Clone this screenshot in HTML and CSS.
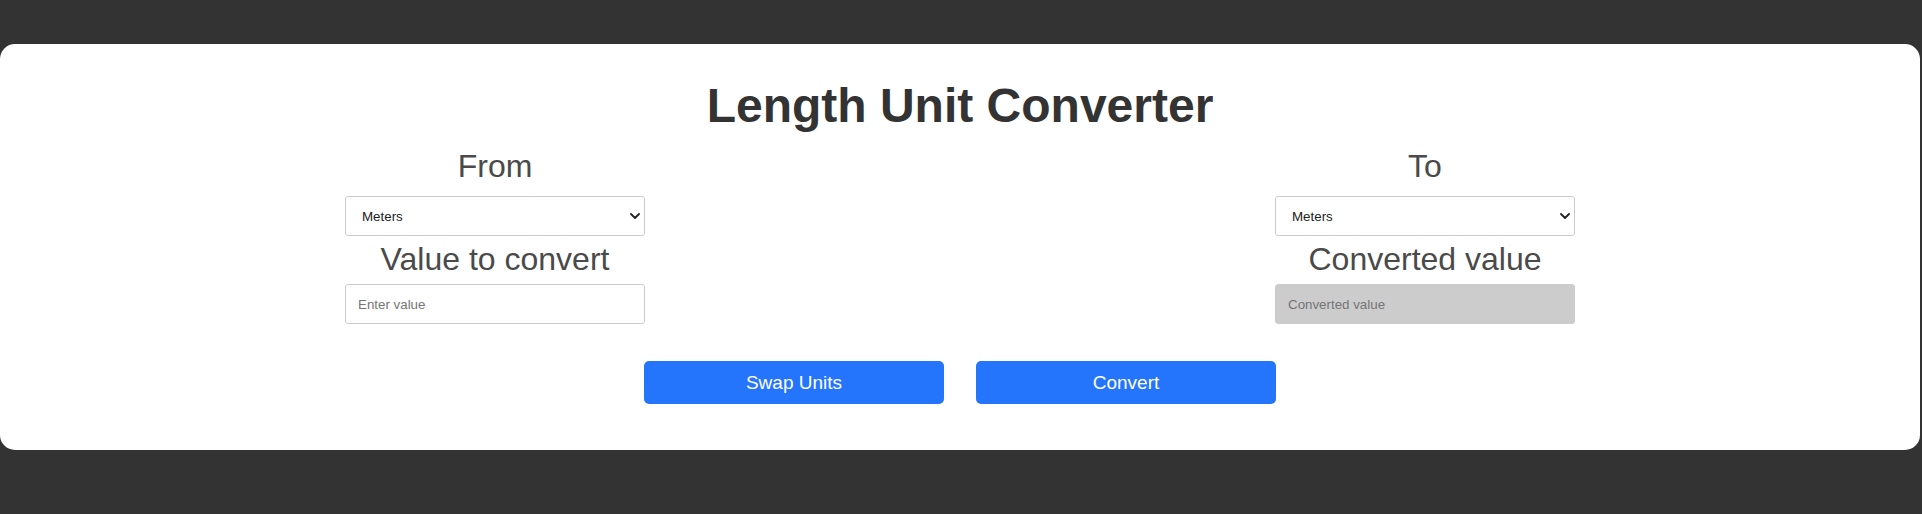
FILE: index.html
```html
<!DOCTYPE html>
<html lang="en">
<head>
<meta charset="utf-8">
<title>Length Unit Converter</title>
<link rel="stylesheet" href="styles.css">
</head>
<body>
  <div class="card">
    <h1 class="title">Length Unit Converter</h1>
    <div class="columns">
      <div class="column">
        <label class="label label-top" for="from">From</label>
        <select id="from" class="field select">
          <option>Meters</option>
          <option>Kilometers</option>
          <option>Centimeters</option>
          <option>Feet</option>
          <option>Inches</option>
        </select>
        <label class="label label-mid" for="value">Value to convert</label>
        <input id="value" class="field input" type="text" placeholder="Enter value">
      </div>
      <div class="column">
        <label class="label label-top" for="to">To</label>
        <select id="to" class="field select">
          <option>Meters</option>
          <option>Kilometers</option>
          <option>Centimeters</option>
          <option>Feet</option>
          <option>Inches</option>
        </select>
        <label class="label label-mid" for="result">Converted value</label>
        <input id="result" class="field input output" type="text" placeholder="Converted value" readonly>
      </div>
    </div>
    <div class="actions">
      <button class="btn" type="button">Swap Units</button>
      <button class="btn" type="button">Convert</button>
    </div>
  </div>
</body>
</html>
```

FILE: styles.css
```css
html, body {
  margin: 0;
  padding: 0;
}

body {
  background: #333333;
  font-family: "Liberation Sans", Arial, sans-serif;
  height: 514px;
  overflow: hidden;
}

.card {
  box-sizing: border-box;
  width: 1920px;
  margin-top: 44px;
  background: #ffffff;
  border-radius: 15px;
  padding: 34px 0 46px;
}

.title {
  margin: 0;
  text-align: center;
  font-size: 48px;
  line-height: 56px;
  font-weight: bold;
  color: #333333;
}

.columns {
  width: 1230px;
  margin: 14px auto 0;
  display: flex;
  justify-content: space-between;
}

.column {
  width: 300px;
  display: flex;
  flex-direction: column;
}

.label {
  display: block;
  text-align: center;
  font-size: 32px;
  line-height: 37px;
  color: #4a4a4a;
}

.label-mid {
  margin-top: 5px;
}

.field {
  box-sizing: border-box;
  width: 300px;
  height: 40px;
  margin: 0;
  border: 1px solid #cccccc;
  border-radius: 3px;
  background: #ffffff;
  font-family: "Liberation Sans", Arial, sans-serif;
  font-size: 13.33px;
  color: #222222;
  outline: none;
}

.select {
  margin-top: 11px;
  padding: 0 30px 0 16px;
  -webkit-appearance: none;
  appearance: none;
  background-image: url("data:image/svg+xml;utf8,<svg xmlns='http://www.w3.org/2000/svg' width='10' height='6' viewBox='0 0 10 6'><path d='M1 1 L5 5 L9 1' fill='none' stroke='%23222' stroke-width='1.8' stroke-linecap='round' stroke-linejoin='round'/></svg>");
  background-repeat: no-repeat;
  background-position: right 4px center;
  background-size: 10px 6px;
}

.input {
  margin-top: 6px;
  padding: 0 12px;
}

.input::placeholder {
  color: #757575;
}

.output {
  background: #cccccc;
  border-color: #cccccc;
}

.actions {
  margin-top: 37px;
  display: flex;
  justify-content: center;
  gap: 32px;
}

.btn {
  width: 300px;
  height: 43px;
  margin: 0;
  padding: 0;
  border: none;
  border-radius: 5px;
  background: #2575fc;
  color: #ffffff;
  font-family: "Liberation Sans", Arial, sans-serif;
  font-size: 19px;
  cursor: pointer;
}
```
